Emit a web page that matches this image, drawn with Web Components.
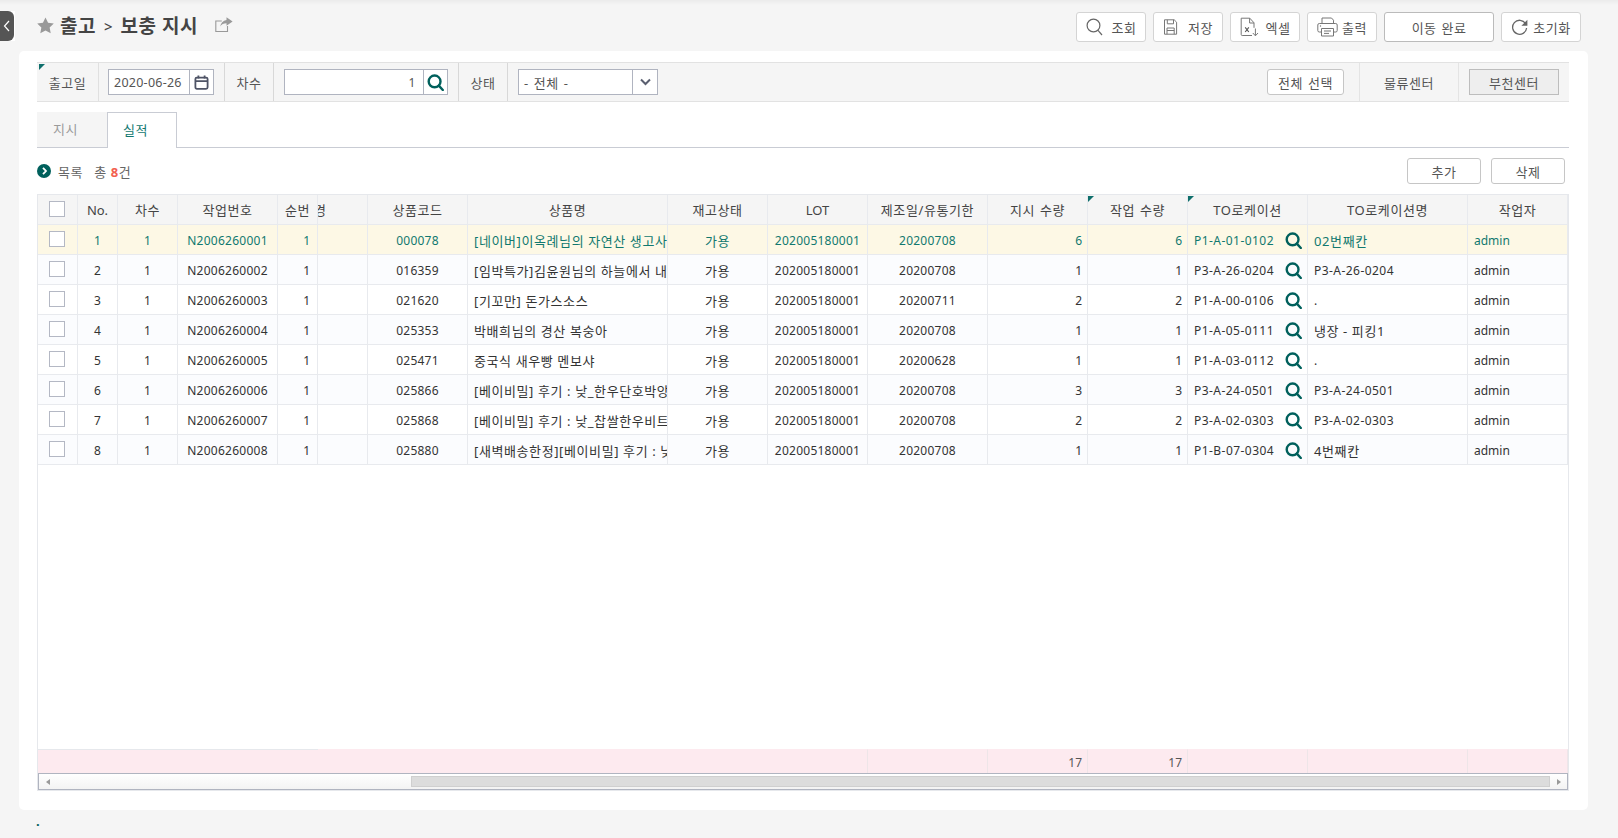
<!DOCTYPE html>
<html lang="ko">
<head>
<meta charset="utf-8">
<title>보충 지시</title>
<style>
  html, body { margin: 0; height: 100%; }
  body {
    background: #f5f5f5;
    font-family: "Noto Sans", "Noto Sans CJK KR", sans-serif;
    font-size: 13px;
    color: #333;
    overflow: hidden;
  }
</style>
</head>
<body>
<template id="tpl-shell">
  <style>
    :host { display: block; position: relative; height: 838px; box-sizing: border-box;
      background: linear-gradient(#ebebeb, #f5f5f5 5px, #f5f5f5 5px); }
    .toggle { position: absolute; left: 0; top: 11px; width: 15px; height: 30px; background: #fff; }
    .toggle div { width: 14px; height: 30px; background: #555; border-radius: 0 6px 6px 0;
      display: flex; align-items: center; justify-content: center; }
    .foot { padding: 3px 0 0 36px; line-height: 16px; color: #00605c; font-weight: 700; }
  </style>
  <div class="toggle"><div>
    <svg width="8" height="12" viewBox="0 0 8 12" fill="none" stroke="#fff" stroke-width="1.2"><path d="M6 1 1.5 6 6 11"/></svg>
  </div></div>
  <slot name="header"></slot>
  <slot name="panel"></slot>
  <div class="foot">.</div>
</template>

<template id="tpl-header">
  <style>
    :host { display: flex; align-items: center; height: 51px; box-sizing: border-box; padding: 0 37px 0 37px; }
    .title { display: flex; align-items: center; height: 30px; margin-top: -1px; font-weight: 700; font-size: 19px; color: #444; letter-spacing: .5px; }
    .star { margin-right: 6px; }
    .gt { font-size: 15px; font-weight: 500; margin: 2px 8px 0 8px; letter-spacing: 0; }
    .share { margin-left: 17px; }
    .tools { margin-left: auto; display: flex; gap: 7px; margin-top: 3px; }
  </style>
  <div class="title">
    <svg class="star" width="17" height="17" viewBox="0 0 16 16"><path fill="#999" d="M8 .4l2.4 5 5.4.7-3.9 3.8 1 5.4L8 12.7l-4.9 2.6 1-5.4L.2 6.1l5.4-.7z"/></svg>
    <span>출고</span><span class="gt">&gt;</span><span>보충 지시</span>
    <svg class="share" width="18" height="16" viewBox="0 0 18 16" fill="none">
      <path d="M12.5 9v5.5H.8V4h6" stroke="#999" stroke-width="1.1"/>
      <path fill="#999" d="M11.5.3 17.6 4.6l-6.1 4.2V6.3C8.6 6.3 6.6 7.4 5.2 9.6c.5-3.6 2.8-6 6.3-6.6z"/>
    </svg>
  </div>
  <div class="tools"><slot></slot></div>
</template>

<template id="tpl-tool-button">
  <style>
    :host { display: inline-flex; box-sizing: border-box; height: 30px; width: var(--w, 70px);
      background: #fff; border: 1px solid #d4d4d4; border-radius: 3px; align-items: center; justify-content: center;
      gap: var(--gap, 6px); font-size: 13px; color: #555; white-space: nowrap; letter-spacing: .5px; }
    :host([strong]) { border-color: #bbb; }
    svg { display: block; flex: none; }
    .lbl { word-spacing: 1px; }
  </style>
  <span id="ic" style="display:contents"></span><span class="lbl"><slot></slot></span>
</template>

<template id="tpl-panel">
  <style>
    :host { display: block; box-sizing: border-box; margin-left: 19px; width: 1569px; height: 759px;
      background: #fff; border-radius: 5px; padding: 11px 19px 19px 18px; }
  </style>
  <slot></slot>
</template>

<template id="tpl-filter">
  <style>
    :host { display: flex; align-items: center; box-sizing: border-box; height: 40px; position: relative;
      background: #f5f5f5; border-top: 1px solid #e2e2e2; border-bottom: 1px solid #e2e2e2; color: #555; font-size: 13px; letter-spacing: .6px; }
    :host::before { content: ""; position: absolute; left: 2px; top: 1px; border-style: solid; border-width: 6px 6px 0 0;
      border-color: #0f6f6c transparent transparent transparent; }
    .cell { display: flex; align-items: center; justify-content: center; height: 100%; box-sizing: border-box; }
    .c1 { width: 62px; border-right: 1px solid #e0e0e0; }
    .c2 { width: 50px; border-left: 1px solid #d8d8d8; border-right: 1px solid #d8d8d8; }
    .c3 { width: 100px; border-left: 1px solid #e4e4e4; border-right: 1px solid #e4e4e4; }
    .box { display: flex; height: 26px; box-sizing: border-box; background: #fff; border: 1px solid #b0b4c0; }
    .box .txt { flex: 1; display: flex; align-items: center; padding: 0 6px; color: #555; font-size: 12.5px; overflow: hidden; }
    .box .btn { display: flex; align-items: center; justify-content: center; border-left: 1px solid #b0b4c0; }
    .date { width: 106px; margin: 0 10px 0 9px; }
    .date .btn { width: 23px; }
    .date .txt { padding-left: 5px; letter-spacing: .25px; }
    .num { width: 164px; margin: 0 10px 0 10px; }
    .num .txt { justify-content: flex-end; padding-right: 7px; font-size: 12px; }
    .num .btn { width: 23px; }
    .sel { width: 140px; margin-left: 10px; }
    .sel .btn { width: 24px; }
    .sel .txt { font-size: 13px; padding-left: 5px; word-spacing: 1px; }
    .grow { flex: 1; }
    .all { width: 77px; height: 26px; box-sizing: border-box; background: #fff; border: 1px solid #c6c6c6; border-radius: 3px;
      display: flex; align-items: center; justify-content: center; margin-right: 15px; word-spacing: 1px; }
    .on { width: 90px; height: 26px; box-sizing: border-box; background: #eee; border: 1px solid #bdbdbd;
      display: flex; align-items: center; justify-content: center; margin: 0 10px; }
  </style>
  <div class="cell c1">출고일</div>
  <div class="box date">
    <div class="txt">2020-06-26</div>
    <div class="btn">
      <svg width="15" height="15" viewBox="0 0 15 15" fill="none" stroke="#4f5466" stroke-width="1.8">
        <rect x="1.4" y="2.6" width="12.2" height="11.2" rx="1.5"/><path d="M1.4 6.2h12.2M4.4 .6v3M10.6 .6v3"/>
      </svg>
    </div>
  </div>
  <div class="cell c2">차수</div>
  <div class="box num">
    <div class="txt">1</div>
    <div class="btn"><ui-glass></ui-glass></div>
  </div>
  <div class="cell c2">상태</div>
  <div class="box sel">
    <div class="txt">- 전체 -</div>
    <div class="btn">
      <svg width="11" height="8" viewBox="0 0 11 8" fill="none" stroke="#5a5f70" stroke-width="2"><path d="M1 1.5 5.5 6 10 1.5"/></svg>
    </div>
  </div>
  <div class="grow"></div>
  <div class="all">전체 선택</div>
  <div class="cell c3">물류센터</div>
  <div class="on">부천센터</div>
</template>

<template id="tpl-glass">
  <style>:host { display: inline-flex; } svg { display: block; }</style>
  <svg width="17" height="17" viewBox="0 0 17 17" fill="none" stroke="#00605c" stroke-width="2.4">
    <circle cx="7.6" cy="7.4" r="5.9"/><path d="M11.8 11.6 15.8 16" stroke-linecap="round"/>
  </svg>
</template>

<template id="tpl-tabs">
  <style>
    :host { display: flex; height: 36px; margin-top: 10px; box-sizing: border-box; border-bottom: 1px solid #c9ccd4; font-size: 13px; letter-spacing: .6px; }
    .t { height: 36px; box-sizing: border-box; display: flex; align-items: center; padding: 0 0 2px 16px; }
    .off { width: 70px; height: 35px; background: #f5f5f5; color: #9a9a9a; }
    .cur { width: 70px; padding-left: 15px; background: #fff; color: #11786f; border: 1px solid #c9ccd4; border-bottom: 0; }
  </style>
  <div class="t off">지시</div>
  <div class="t cur">실적</div>
</template>

<template id="tpl-listbar">
  <style>
    :host { display: flex; align-items: center; height: 26px; margin: 10px 0; font-size: 13px; color: #666; letter-spacing: .6px; }
    .dot { width: 14px; height: 14px; border-radius: 50%; background: #00605c; display: flex; align-items: center; justify-content: center; margin-right: 7px; }
    .total { margin-left: 11px; }
    b { color: #f2604f; font-weight: 700; }
    .btns { margin-left: auto; display: flex; gap: 10px; margin-right: 4px; }
    .b { width: 74px; height: 26px; box-sizing: border-box; border: 1px solid #c6c6c6; border-radius: 3px; background: #fff;
      display: flex; align-items: center; justify-content: center; color: #555; }
  </style>
  <span class="dot"><svg width="7" height="8" viewBox="0 0 7 8" fill="none" stroke="#fff" stroke-width="1.8"><path d="M2 .8 5 4 2 7.2"/></svg></span>
  <span>목록</span>
  <span class="total">총 <b>8</b>건</span>
  <div class="btns"><div class="b">추가</div><div class="b">삭제</div></div>
</template>

<template id="tpl-grid">
  <style>
    :host { display: flex; flex-direction: column; height: 597px; box-sizing: border-box;
      border: 1px solid #e6e8ec; --cols: 40px 40px 60px 100px 40px 50px 100px 200px 100px 100px 120px 100px 100px 120px 160px 100px;
      font-size: 12px; color: #333; }
    .row { display: grid; grid-template-columns: var(--cols); height: 30px; flex: none; }
    .c { box-sizing: border-box; border-right: 1px solid #e8eaee; border-bottom: 1px solid #e8eaee;
      display: flex; align-items: center; padding: 2px 6px 0; white-space: nowrap; overflow: hidden; min-width: 0; }
    .ctr { justify-content: center; padding-left: 0; padding-right: 0; }
    .r { justify-content: flex-end; padding-right: 5px; }
    .r7 { justify-content: flex-end; padding-right: 7px; }
    .d { letter-spacing: .25px; }
    .lc { letter-spacing: .45px; }
    .ko { font-size: 13px; letter-spacing: .6px; padding-top: 1px; }
    .chk { padding: 0 1px 1px 0; }
    .head .c { background: #f5f5f5; font-size: 13px; color: #444; position: relative; overflow: visible; word-spacing: 1px; letter-spacing: .6px; padding-top: 0; }
    .head .en { letter-spacing: 0; }
    .head .clip { overflow: hidden; padding: 0; }
    .head .clip span { margin-left: -4px; }
    .head .tri::before { content: ""; position: absolute; left: 0; top: 1px; border-style: solid; border-width: 6px 6px 0 0;
      border-color: #0f6f6c transparent transparent transparent; }
    .alt .c { background: #fbfcfe; }
    .sel .c { background: #fdf8e5; color: #11786f; }
    .box { width: 16px; height: 16px; box-sizing: border-box; border: 1px solid #b4b8c4; background: #fff; }
    .loc { justify-content: space-between; padding-right: 5px; }
    .fill { flex: 1; }
    .foot { height: 24px; background: #fdeaef; }
    .foot .c { background: #fdeaef; border-right-color: #eee5e8; border-bottom: 0; border-top: 1px solid transparent; color: #555; }
    .foot .g { border-right: 0; }
    .foot .gt { border-top-color: #e6e8ec; }
    .bar { height: 17px; flex: none; box-sizing: border-box; border: 1px solid #b0b4c0;
      background: linear-gradient(#fff, #f3f3f3); display: flex; align-items: center; }
    .arr { width: 17px; display: flex; justify-content: center; }
    .gap { width: 355px; }
    .thumb { flex: 1; height: 11px; box-sizing: border-box; background: #dcdcdc; border: 1px solid #cfcfcf; }
  </style>
  <div id="body" style="display:contents"></div>
</template>

<script>
  // shadow root from a template, same thing for every element
  function mount(el, id) {
    const root = el.attachShadow({ mode: 'open' });
    root.appendChild(document.getElementById(id).content.cloneNode(true));
    return root;
  }
  function simple(tag, id) {
    customElements.define(tag, class extends HTMLElement {
      constructor() { super(); mount(this, id); }
    });
  }

  const TOOL_ICONS = {
    search: `<svg width="17" height="18" viewBox="0 0 17 18" fill="none" stroke="#666" stroke-width="1.2"><circle cx="7.5" cy="7.5" r="6.4"/><path d="M12 12.4 16 17"/></svg>`,
    save: `<svg width="15" height="16" viewBox="0 0 15 16" fill="none" stroke="#777" stroke-width="1"><path d="M1.5.8h9.7l2.4 2.4v12H1.5z"/><path d="M4.3.8v4h6.2v-4M4 15.2V9h7.2v6.2M4 11.5h7.2"/></svg>`,
    excel: `<svg width="20" height="20" viewBox="0 0 20 20" fill="none" stroke="#777" stroke-width="1"><path d="M12 18.5H2.2a1 1 0 0 1-1-1V1.2h8.6l4.2 4.6v5"/><path d="M9.6 1.2v4.8H14"/><path d="M5.2 10.4l3.6 4.6M8.8 10.4l-3.6 4.6" stroke="#555" stroke-width="1.1"/><path d="M15.4 11.5v7M12.8 16l2.6 2.8 2.6-2.8"/></svg>`,
    print: `<svg width="21" height="20" viewBox="0 0 21 20" fill="none" stroke="#777" stroke-width="1"><path d="M5 6.5V1h9.5l2 2.2v3.3"/><rect x=".8" y="6.5" width="19.4" height="8.5" rx="1.5"/><path d="M4.5 11.5h12V19h-12z" fill="#fff"/><path d="M7 14h7M7 16.4h5" /><circle cx="3.5" cy="9" r=".7" fill="#777" stroke="none"/></svg>`,
    refresh: `<svg width="17" height="17" viewBox="0 0 17 17" fill="none" stroke="#666" stroke-width="1.3"><path d="M14.6 4.6A7 7 0 1 0 15.6 9"/><path fill="#666" stroke="none" d="M16.4 .8v6h-6z"/></svg>`
  };

  customElements.define('tool-button', class extends HTMLElement {
    constructor() {
      super();
      this.root = mount(this, 'tpl-tool-button');
    }
    // attributes are not there yet in the constructor when the parser creates the element
    connectedCallback() {
      const name = this.getAttribute('icon');
      if (name) this.root.getElementById('ic').innerHTML = TOOL_ICONS[name];
      if (this.getAttribute('width')) this.style.setProperty('--w', this.getAttribute('width') + 'px');
      if (this.getAttribute('gap')) this.style.setProperty('--gap', this.getAttribute('gap') + 'px');
    }
  });

  simple('ui-glass', 'tpl-glass');
  simple('page-shell', 'tpl-shell');
  simple('page-header', 'tpl-header');
  simple('content-panel', 'tpl-panel');
  simple('filter-bar', 'tpl-filter');
  simple('tab-strip', 'tpl-tabs');
  simple('list-bar', 'tpl-listbar');

  const ROWS = [
    ['N2006260001', '000078', '[네이버]이옥례님의 자연산 생고사리', 6, 'P1-A-01-0102', '02번째칸'],
    ['N2006260002', '016359', '[임박특가]김윤원님의 하늘에서 내린', 1, 'P3-A-26-0204', 'P3-A-26-0204'],
    ['N2006260003', '021620', '[기꼬만] 돈가스소스', 2, 'P1-A-00-0106', '.'],
    ['N2006260004', '025353', '박배희님의 경산 복숭아', 1, 'P1-A-05-0111', '냉장 - 피킹1'],
    ['N2006260005', '025471', '중국식 새우빵 멘보샤', 1, 'P1-A-03-0112', '.'],
    ['N2006260006', '025866', '[베이비밀] 후기 : 낮_한우단호박앙금', 3, 'P3-A-24-0501', 'P3-A-24-0501'],
    ['N2006260007', '025868', '[베이비밀] 후기 : 낮_찹쌀한우비트', 2, 'P3-A-02-0303', 'P3-A-02-0303'],
    ['N2006260008', '025880', '[새벽배송한정][베이비밀] 후기 : 낮', 1, 'P1-B-07-0304', '4번째칸']
  ];
  const DATES = ['20200708', '20200708', '20200711', '20200708', '20200628', '20200708', '20200708', '20200708'];
  const LOT = '202005180001';

  customElements.define('data-grid', class extends HTMLElement {
    constructor() {
      super();
      const root = mount(this, 'tpl-grid');
      root.getElementById('body').innerHTML = this.header() + ROWS.map((r, i) => this.row(r, i)).join('') +
        `<div class="fill"></div>` + this.footer() + this.scrollbar();
    }

    header() {
      return `<div class="row head">
        <div class="c ctr chk"><span class="box"></span></div>
        <div class="c ctr en">No.</div>
        <div class="c ctr">차수</div>
        <div class="c ctr">작업번호</div>
        <div class="c ctr">순번</div>
        <div class="c clip"><span>경</span></div>
        <div class="c ctr">상품코드</div>
        <div class="c ctr">상품명</div>
        <div class="c ctr">재고상태</div>
        <div class="c ctr en">LOT</div>
        <div class="c ctr">제조일/유통기한</div>
        <div class="c ctr">지시 수량</div>
        <div class="c ctr tri">작업 수량</div>
        <div class="c ctr tri">TO로케이션</div>
        <div class="c ctr">TO로케이션명</div>
        <div class="c ctr">작업자</div>
      </div>`;
    }

    row(r, i) {
      const cls = i === 0 ? 'sel' : (i % 2 ? 'alt' : '');
      const [work, code, name, qty, loc, locName] = r;
      const nameCls = /[가-힣]/.test(locName) ? 'ko' : 'lc';
      return `<div class="row ${cls}">
        <div class="c ctr chk"><span class="box"></span></div>
        <div class="c ctr">${i + 1}</div>
        <div class="c ctr">1</div>
        <div class="c ctr d">${work}</div>
        <div class="c r7">1</div>
        <div class="c"></div>
        <div class="c ctr d">${code}</div>
        <div class="c ko">${name}</div>
        <div class="c ctr ko">가용</div>
        <div class="c ctr d">${LOT}</div>
        <div class="c ctr d">${DATES[i]}</div>
        <div class="c r">${qty}</div>
        <div class="c r">${qty}</div>
        <div class="c loc"><span class="lc">${loc}</span><ui-glass></ui-glass></div>
        <div class="c ${nameCls}">${locName}</div>
        <div class="c">admin</div>
      </div>`;
    }

    footer() {
      return `<div class="row foot">
        <div class="c g gt" style="grid-column:span 5"></div>
        <div class="c" style="grid-column:span 5"></div>
        <div class="c"></div>
        <div class="c r">17</div>
        <div class="c r">17</div>
        <div class="c"></div>
        <div class="c"></div>
        <div class="c"></div>
      </div>`;
    }

    scrollbar() {
      return `<div class="bar">
        <span class="arr"><svg width="4" height="6" viewBox="0 0 4 6"><path fill="#999" d="M4 0v6L0 3z"/></svg></span>
        <span class="gap"></span>
        <span class="thumb"></span>
        <span class="arr"><svg width="4" height="6" viewBox="0 0 4 6"><path fill="#999" d="M0 0v6l4-3z"/></svg></span>
      </div>`;
    }
  });
</script>

<page-shell>
  <page-header slot="header">
    <tool-button icon="search" gap="9">조회</tool-button>
    <tool-button icon="save" gap="10">저장</tool-button>
    <tool-button icon="excel" gap="6">엑셀</tool-button>
    <tool-button icon="print" gap="4">출력</tool-button>
    <tool-button strong width="110">이동 완료</tool-button>
    <tool-button icon="refresh" width="80" gap="5">초기화</tool-button>
  </page-header>
  <content-panel slot="panel">
    <filter-bar></filter-bar>
    <tab-strip></tab-strip>
    <list-bar></list-bar>
    <data-grid></data-grid>
  </content-panel>
</page-shell>
</body>
</html>
